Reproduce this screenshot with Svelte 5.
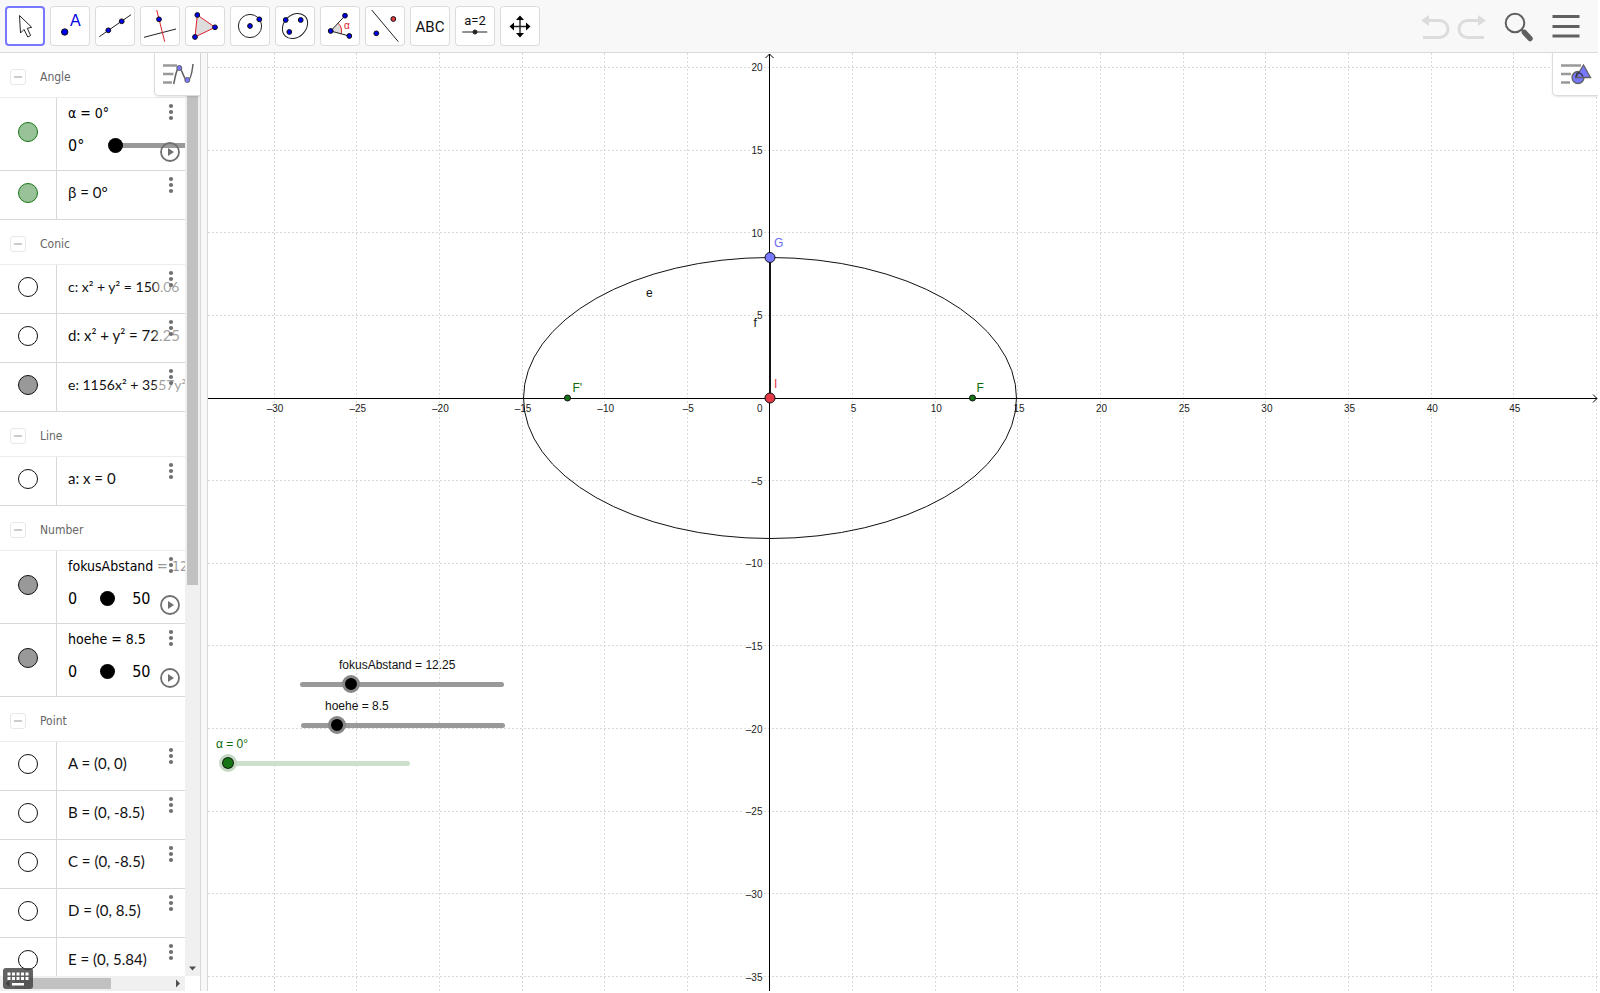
<script>
  const groups = [
    {
      name: "Angle",
      items: [
        { text: "α = 0°", min: "0°", top: 360, color: "green", wide: true },
        { text: "β = 0°", color: "green" },
      ],
    },
    {
      name: "Conic",
      items: [
        { text: "c: x² + y² = 150.06", long: true },
        { text: "d: x² + y² = 72.25" },
        { text: "e: 1156x² + 3557y²", color: "gray", long: true },
      ],
    },
    { name: "Line", items: [{ text: "a: x = 0" }] },
    {
      name: "Number",
      items: [
        { text: "fokusAbstand = 12", min: "0", max: "50", top: 50, color: "gray" },
        { text: "hoehe = 8.5", min: "0", max: "50", top: 50, color: "gray" },
      ],
    },
    {
      name: "Point",
      items: [
        { text: "A = (0, 0)" },
        { text: "B = (0, -8.5)" },
        { text: "C = (0, -8.5)" },
        { text: "D = (0, 8.5)" },
        { text: "E = (0, 5.84)" },
      ],
    },
  ];

  const tools = ["Move", "Point", "Line", "Perpendicular", "Polygon", "Circle", "Ellipse", "Angle", "Reflect", "Text", "Slider", "Move view"];
  let selected = $state("Move");

  let fokus = $state(12.25);
  let hoehe = $state(8.5);
  let alpha = $state(0);

  // size of the drawing area and the place of the origin in it
  let width = $state(1390);
  let height = $state(938);
  const ox = 562;
  const oy = 345;
  const unit = 16.53;

  const X = (x) => ox + x * unit;
  const Y = (y) => oy - y * unit;
  const crisp = (n) => Math.floor(n) + 0.5;
  const num = (n) => (n < 0 ? "–" + -n : "" + n);

  // the axes sit on whole pixels
  const ax = 561.5;
  const ay = 345.5;

  const range = (from, to) => {
    const list = [];
    for (let n = Math.ceil(from / 5) * 5; n <= to; n += 5) {
      if (n !== 0) list.push(n);
    }
    return list;
  };

  const xs = $derived(range(-ox / unit, (width - ox) / unit));
  const ys = $derived(range((oy - height) / unit, oy / unit));
  const a = $derived(Math.sqrt(fokus * fokus + hoehe * hoehe));
</script>

{#snippet dot(x, y, fill = "#0000f0", r = 2.4)}
  <circle cx={x} cy={y} {r} {fill} stroke="#111" />
{/snippet}

<div class="app">
  <header>
    <div class="tools">
      {#each tools as tool}
        <button class="tool" class:selected={selected === tool} aria-label={tool} onclick={() => (selected = tool)}>
          <svg width="40" height="40" viewBox="0 0 40 40" fill="none" stroke="#222" stroke-width="1">
            {#if tool === "Move"}
              <path d="M14.5 9.5L15.5 27L19 23.5L22.8 31L25.6 29.5L22.3 22.3L26.7 21.3Z" fill="#fff" />
            {:else if tool === "Point"}
              {@render dot(14.7, 26, "#0000f0", 3.2)}
              <text class="letter" x="20" y="20">A</text>
            {:else if tool === "Line"}
              <path d="M4.3 30.7L36 8.7" />
              {@render dot(13.3, 24.3)}
              {@render dot(26.7, 15.3)}
            {:else if tool === "Perpendicular"}
              <path d="M4 31.3L36 23" />
              <path d="M16.7 4L24.7 35.7" stroke="#e0202a" />
              {@render dot(19, 13.3)}
            {:else if tool === "Polygon"}
              <path d="M12.3 9L30 21.3L10 31Z" fill="#ddd" stroke="#e0202a" />
              {@render dot(12.3, 9)}
              {@render dot(30, 21.3)}
              {@render dot(10, 31)}
            {:else if tool === "Circle"}
              <circle cx="20" cy="20" r="11.6" />
              {@render dot(20, 20)}
              {@render dot(29.3, 13.3)}
            {:else if tool === "Ellipse"}
              <ellipse cx="20" cy="20" rx="14" ry="11" transform="rotate(-45 20 20)" />
              {@render dot(10.7, 14)}
              {@render dot(25.7, 14)}
              {@render dot(14.3, 26)}
            {:else if tool === "Angle"}
              <path d="M10.7 25L18 17.2A10.8 10.8 0 0 1 21.2 27.8Z" fill="#ddd" stroke="none" />
              <path d="M18 17.2A10.8 10.8 0 0 1 21.2 27.8" stroke="#e0202a" />
              <path d="M25 9.7L10.7 25L29.3 30" />
              {@render dot(10.7, 25)}
              {@render dot(25, 9.7)}
              {@render dot(29.3, 30)}
              <text class="alpha" x="24" y="23">α</text>
            {:else if tool === "Reflect"}
              <path d="M6.7 4L33.3 35.7" />
              {@render dot(11.3, 27.3)}
              {@render dot(28.3, 13, "#e83a42")}
            {:else if tool === "Text"}
              <text class="abc" x="20" y="26">ABC</text>
            {:else if tool === "Slider"}
              <text class="value" x="20" y="19">a=2</text>
              <path d="M7.3 26H32.3" />
              <circle cx="20" cy="26" r="2" fill="#222" />
            {:else}
              <path d="M20 12V29M12 20.5H28" stroke-width="1.4" />
              <path d="M20 9.5L24 14H16ZM20 31.5L24 27H16ZM9.5 20.5L14 16.5V24.5ZM30.5 20.5L26 16.5V24.5Z" fill="#000" stroke="none" />
            {/if}
          </svg>
        </button>
      {/each}
    </div>
    <div class="actions">
      <button aria-label="Undo">
        <svg width="30" height="40" viewBox="0 0 30 40" fill="none" stroke="#dcdcdc" stroke-width="3">
          <path d="M7 14.5H19.5A8.5 8.5 0 0 1 19.5 31.5H3" />
          <path d="M1 14.5L9 9V20Z" fill="#dcdcdc" stroke="none" />
        </svg>
      </button>
      <button class="redo" aria-label="Redo">
        <svg width="30" height="40" viewBox="0 0 30 40" fill="none" stroke="#dcdcdc" stroke-width="3">
          <path d="M23 14.5H10.5A8.5 8.5 0 0 0 10.5 31.5H27" />
          <path d="M29 14.5L21 9V20Z" fill="#dcdcdc" stroke="none" />
        </svg>
      </button>
      <button class="search" aria-label="Search">
        <svg width="30" height="40" viewBox="0 0 30 40" fill="none" stroke="#606060">
          <circle cx="11" cy="17" r="9.3" stroke-width="2" />
          <path d="M17.5 23.5L20 26" stroke-width="2.5" />
          <path d="M20.5 26.5L26 32.5" stroke-width="5.5" stroke-linecap="round" />
        </svg>
      </button>
      <button aria-label="Menu">
        <svg width="28" height="40" viewBox="0 0 28 40" stroke="#606060" stroke-width="3">
          <path d="M.5 10.5H27.5M.5 20.5H27.5M.5 30H27.5" />
        </svg>
      </button>
    </div>
  </header>

  <main>
    <aside>
      <div class="algebra">
        {#each groups as group}
          <section>
            <h2>
              <button class="fold" aria-label="Collapse {group.name}"></button>
              {group.name}
            </h2>
            {#each group.items as item}
              <div class="item" class:with-slider={item.min}>
                <div class="marble-cell">
                  <button class="marble {item.color ?? ''}" aria-label="Show {item.text}"></button>
                </div>
                <div class="definition">
                  <div class="formula" class:long={item.long}>{item.text}</div>
                  {#if item.min}
                    <label class="range" class:wide={item.wide}>
                      <span>{item.min}</span>
                      <input type="range" min="0" max={item.top} value={item.wide ? 0 : item.top / 2} aria-label={item.text} />
                      {#if item.max}<span>{item.max}</span>{/if}
                    </label>
                  {/if}
                </div>
                <button class="more" aria-label="More">
                  <svg width="6" height="18" viewBox="0 0 6 18" fill="#707070">
                    <circle cx="3" cy="3" r="2.1" />
                    <circle cx="3" cy="9" r="2.1" />
                    <circle cx="3" cy="15" r="2.1" />
                  </svg>
                </button>
                {#if item.min}
                  <button class="play" aria-label="Play">
                    <svg width="20" height="20" viewBox="0 0 20 20">
                      <circle cx="10" cy="10" r="9" fill="none" stroke="#707070" stroke-width="1.8" />
                      <path d="M8 6L14 10L8 14Z" fill="#707070" />
                    </svg>
                  </button>
                {/if}
              </div>
            {/each}
          </section>
        {/each}
      </div>
      <div class="vbar">
        <div class="thumb"></div>
        <svg width="15" height="15" viewBox="0 0 15 15"><path d="M4 5.5H11L7.5 9.5Z" fill="#505050" /></svg>
      </div>
      <div class="hbar">
        <svg width="15" height="15" viewBox="0 0 15 15"><path d="M9.5 4V11L5.5 7.5Z" fill="#505050" /></svg>
        <div class="thumb"></div>
        <svg width="15" height="15" viewBox="0 0 15 15"><path d="M6 3.5V11.5L10 7.5Z" fill="#505050" /></svg>
      </div>
      <button class="panel" aria-label="Algebra style bar">
        <svg width="45" height="42" viewBox="0 0 45 42" fill="none" stroke="#999" stroke-width="2.5">
          <path d="M8 12.5H22M8 21H18.5M8 29.5H17" />
          <path d="M18.7 31C20.5 22 22 14.5 24.3 14.5S29 27.5 32.3 27.5S37 20 38 11" stroke="#606060" stroke-width="1.5" />
          <g fill="#7777ff" stroke="#606060" stroke-width="1">
            <circle cx="24.3" cy="15" r="2.5" />
            <circle cx="32.3" cy="27" r="2.5" />
          </g>
        </svg>
      </button>
      <button class="keyboard" aria-label="Keyboard">
        <svg width="30" height="21" viewBox="0 0 30 21" fill="#fff">
          {#each [0, 1, 2, 3, 4] as k}
            <rect x={4.5 + k * 4.5} y="4.5" width="3" height="3" />
            <rect x={4.5 + k * 4.5} y="9" width="3" height="3" />
          {/each}
          <rect x="9" y="15" width="12" height="2.5" />
        </svg>
      </button>
    </aside>

    <div class="splitter"></div>

    <div class="graphics" bind:clientWidth={width} bind:clientHeight={height}>
      <svg class="plane" {width} {height}>
        <g class="grid">
          {#each xs as n}
            <line x1={crisp(X(n))} x2={crisp(X(n))} y1="0" y2={height} />
          {/each}
          {#each ys as n}
            <line x1="0" x2={width} y1={crisp(Y(n))} y2={crisp(Y(n))} />
          {/each}
        </g>
        <g class="axes">
          <path d="M0 {ay}H{width - 1}M{width - 5} {ay - 4}L{width - 1} {ay}L{width - 5} {ay + 4}" />
          <path d="M{ax} {height}V1M{ax - 4} 5L{ax} 1L{ax + 4} 5" />
        </g>
        <g class="numbers">
          {#each xs as n}
            {#if X(n) > 20 && X(n) < width - 20}
              <text x={X(n) + 1} y={ay + 13} text-anchor="middle">{num(n)}</text>
            {/if}
          {/each}
          {#each ys as n}
            <text x={ax - 7} y={Y(n) + 4} text-anchor="end">{num(n)}</text>
          {/each}
          <text x={ax - 7} y={ay + 13} text-anchor="end">0</text>
        </g>
        <ellipse cx={ox} cy={oy} rx={a * unit} ry={hoehe * unit} fill="none" stroke="#111" />
        <line x1={ox} x2={ox} y1={Y(hoehe)} y2={oy} stroke="#111" stroke-width="2" />
        <g class="points">
          <circle cx={X(-fokus)} cy={oy} r="3" fill="#157515" />
          <circle cx={X(fokus)} cy={oy} r="3" fill="#157515" />
          <circle cx={ox} cy={Y(hoehe)} r="5" fill="#7777ff" />
          <circle cx={ox} cy={oy} r="5" fill="#e53945" />
        </g>
        <g class="names">
          <text x={X(-fokus) + 5} y={oy - 6} fill="#0a6a0a">F'</text>
          <text x={X(fokus) + 4} y={oy - 6} fill="#0a6a0a">F</text>
          <text x={ox + 4} y={Y(hoehe) - 10} fill="#6a6aee">G</text>
          <text x={ox + 4} y={oy - 10} fill="#dc3545">I</text>
          <text x={X(-7.5)} y={Y(6.1)} fill="#111">e</text>
          <text x={X(-1)} y={Y(4.3)} fill="#111">f</text>
        </g>
      </svg>

      <label class="slider fokus">
        <span class="caption">fokusAbstand = {fokus}</span>
        <span class="bar"></span>
        <input type="range" min="0" max="50" step="0.01" bind:value={fokus} />
      </label>
      <label class="slider hoehe">
        <span class="caption">hoehe = {hoehe}</span>
        <span class="bar"></span>
        <input type="range" min="0" max="50" step="0.01" bind:value={hoehe} />
      </label>
      <label class="slider angle">
        <span class="caption">α = {alpha}°</span>
        <span class="bar"></span>
        <input type="range" min="0" max="360" bind:value={alpha} />
      </label>

      <button class="panel" aria-label="Graphics style bar">
        <svg width="45" height="42" viewBox="0 0 45 42" fill="none" stroke="#999" stroke-width="2.5">
          <path d="M8 12.5H28M8 21H18M8 29.5H17" />
          <g fill="#7777ff" stroke="#606060" stroke-width="1.3">
            <circle cx="25" cy="24.5" r="6" />
            <path d="M30.5 12L37.5 24.5H23Z" />
            <path d="M23 24.5C23 19 27 18 30 23.5" fill="none" stroke="#334" />
          </g>
        </svg>
      </button>
    </div>
  </main>
</div>

<style>
  :global(body) {
    margin: 0;
    background: #fff;
  }

  .app {
    box-sizing: border-box;
    display: flex;
    flex-direction: column;
    height: 100vh;
    padding: 0 2px 2px 0;
    font-family: "DejaVu Sans Condensed", "DejaVu Sans", sans-serif;
    overflow: hidden;
  }

  button {
    padding: 0;
    border: 0;
    background: none;
    cursor: pointer;
  }

  svg {
    display: block;
  }

  header {
    display: flex;
    justify-content: space-between;
    padding: 6px 18px 6px 5px;
    border-bottom: 1px solid #d8d8d8;
    background: #f8f8f8;
  }

  .tools,
  .actions {
    display: flex;
    gap: 5px;
  }

  .tool {
    border-radius: 4px;
    background: #fff;
    box-shadow: inset 0 0 0 1px #dcdcdc;
  }

  .tool.selected {
    box-shadow: inset 0 0 0 2px #7777ff;
  }

  .tool text {
    stroke: none;
    font-family: "Liberation Sans", Arial, sans-serif;
  }

  .letter {
    font-size: 16px;
    fill: #0000e0;
  }

  .alpha {
    font-size: 10px;
    fill: #e0202a;
  }

  .tool .abc {
    font-family: Roboto, sans-serif;
    font-size: 15px;
    text-anchor: middle;
    fill: #111;
  }

  .tool .value {
    font-family: Roboto, sans-serif;
    font-size: 13px;
    text-anchor: middle;
    fill: #111;
  }

  .redo {
    margin-left: 2px;
  }

  .search {
    margin: 0 13px 0 12px;
  }

  main {
    display: flex;
    flex: 1;
    min-height: 0;
  }

  aside {
    position: relative;
    display: grid;
    grid-template-columns: 185px 15px;
    grid-template-rows: minmax(0, 1fr) 15px;
  }

  .algebra {
    overflow: hidden;
  }

  h2 {
    box-sizing: border-box;
    display: flex;
    align-items: center;
    gap: 14px;
    height: 45px;
    margin: 0;
    padding: 3px 0 0 10px;
    border-bottom: 1px solid #ececec;
    color: #666;
    font-size: 12px;
    font-weight: normal;
  }

  .fold {
    display: grid;
    place-items: center;
    width: 16px;
    height: 16px;
    border: 1px solid #e8e8e8;
    border-radius: 3px;
  }

  .fold::before {
    content: "";
    width: 8px;
    height: 2px;
    background: #ccc;
  }

  .item {
    position: relative;
    display: flex;
    height: 48px;
    border-bottom: 1px solid #d8d8d8;
  }

  .item.with-slider {
    height: 72px;
  }

  .marble-cell {
    box-sizing: border-box;
    display: flex;
    flex: none;
    align-items: center;
    justify-content: center;
    width: 57px;
    padding-bottom: 4px;
    border-right: 1px solid #d8d8d8;
  }

  .marble {
    width: 20px;
    height: 20px;
    border: 1px solid #111;
    border-radius: 50%;
  }

  .marble.green {
    border-color: #157515;
    background: #99c299;
  }

  .marble.gray {
    background: #999;
  }

  .definition {
    flex: 1;
    min-width: 0;
    padding-left: 11px;
    overflow: hidden;
  }

  .formula {
    color: #111;
    font-family: Lato, sans-serif;
    font-size: 15px;
    line-height: 43px;
    white-space: nowrap;
  }

  .formula.long {
    font-size: 14px;
  }

  .with-slider .formula {
    color: #000;
    font-family: inherit;
    font-size: 14px;
    line-height: 30px;
  }

  .range {
    display: flex;
    align-items: center;
    height: 35px;
    font-size: 16px;
  }

  .range input {
    flex: none;
    width: 15px;
    height: 15px;
    margin: 0 17px 0 23px;
    appearance: none;
    background: none;
  }

  .range.wide input {
    width: 120px;
    margin-left: 24px;
    background: linear-gradient(#999, #999) center / 108px 5px no-repeat;
  }

  .range input::-webkit-slider-thumb {
    width: 15px;
    height: 15px;
    appearance: none;
    border-radius: 50%;
    background: #000;
  }

  .more {
    position: absolute;
    top: 0;
    right: 0;
    display: flex;
    align-items: flex-start;
    width: 32px;
    height: 40px;
    padding: 5px 0 0 15px;
    background: linear-gradient(90deg, rgba(255, 255, 255, 0), rgba(255, 255, 255, 0.6) 25%);
  }

  .play {
    position: absolute;
    right: 5px;
    bottom: 8px;
  }

  .vbar {
    display: flex;
    flex-direction: column;
    justify-content: space-between;
    background: #f0f0f0;
  }

  .vbar .thumb {
    height: 57.6%;
    margin: 0 2px;
    background: #c1c1c1;
  }

  .hbar {
    display: flex;
    background: #f0f0f0;
  }

  .hbar .thumb {
    width: 96px;
    margin: 2px auto 2px 0;
    background: #c1c1c1;
  }

  .panel {
    position: absolute;
    top: 0;
    right: 0;
    box-sizing: border-box;
    height: 43px;
    background: #fff;
    border: solid #dcdcdc;
    border-width: 0 0 1px 1px;
    border-bottom-left-radius: 5px;
    box-shadow: 0 1px 2px rgba(0, 0, 0, 0.1);
  }

  .keyboard {
    position: absolute;
    bottom: 2px;
    left: 3px;
    border-radius: 3px;
    background: rgba(60, 60, 60, 0.8);
  }

  .splitter {
    width: 6px;
    border: solid #d8d8d8;
    border-width: 0 1px;
    background: #f8f8f8;
  }

  .graphics {
    position: relative;
    flex: 1;
    min-width: 0;
    overflow: hidden;
  }

  .plane {
    position: absolute;
    font-family: "Liberation Sans", Arial, sans-serif;
  }

  .grid {
    stroke: #d8d8d8;
    stroke-dasharray: 2 2;
  }

  .axes {
    fill: none;
    stroke: #000;
  }

  .numbers {
    font-size: 10px;
    fill: #222;
    stroke: #fff;
    stroke-width: 3px;
    paint-order: stroke;
  }

  .points {
    stroke: #111;
  }

  .names {
    font-size: 12px;
  }

  .slider {
    position: absolute;
    display: grid;
    grid-template-rows: 19px 18px;
    width: 218px;
    color: #111;
    font-family: "Liberation Sans", Arial, sans-serif;
    font-size: 12px;
  }

  .fokus {
    top: 603px;
    left: 85px;
  }

  .hoehe {
    top: 644px;
    left: 86px;
  }

  .angle {
    top: 682px;
    left: 11px;
    width: 198px;
    color: #0a6a0a;
  }

  .caption {
    grid-area: 1 / 1;
    line-height: 18px;
  }

  .fokus .caption {
    padding-left: 46px;
  }

  .hoehe .caption {
    padding-left: 31px;
  }

  .angle .caption {
    margin-left: -3px;
  }

  .bar {
    grid-area: 2 / 1;
    align-self: center;
    height: 5px;
    margin: 0 7px;
    border-radius: 3px;
    background: #999;
  }

  .angle .bar {
    background: #cce0cc;
  }

  .slider input {
    grid-area: 2 / 1;
    width: 100%;
    height: 18px;
    margin: 0;
    appearance: none;
    background: none;
  }

  .slider input::-webkit-slider-thumb {
    box-sizing: border-box;
    width: 18px;
    height: 18px;
    appearance: none;
    border: 3px solid #888;
    border-radius: 50%;
    background: #000;
  }

  .angle input::-webkit-slider-thumb {
    border-color: #c4d8c4;
    background: #157515;
    box-shadow: inset 0 0 0 1px #111;
  }
</style>
